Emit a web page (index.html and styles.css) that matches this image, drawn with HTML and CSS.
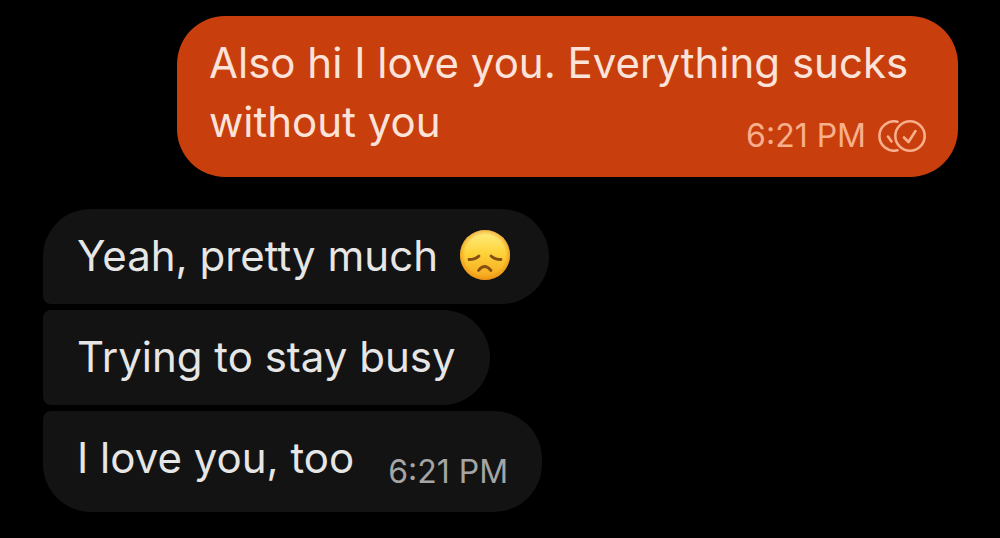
FILE: index.html
```
<!DOCTYPE html>
<html lang="en">
<head>
  <meta charset="UTF-8">
  <meta name="viewport" content="width=device-width, initial-scale=1.0">
  <title>Chat</title>
  <link rel="stylesheet" href="styles.css">
</head>
<body>
  <main class="chat">
    <!-- Sent -->
    <div class="bubble sent">
      Also hi I love you. Everything sucks<br>
      without you
      <span class="meta">
        <time>6:21 PM</time>
        <svg class="read-icon" viewBox="0 0 48 32" role="img" aria-label="Read">
          <path d="M19.500 1.700A14.700 14.700 0 1 0 19.500 30.300M10 16.500l3.500 5"/>
          <circle cx="32" cy="16" r="14.700"/>
          <path d="M26 17.500l4.500 4.500L37.500 11"/>
        </svg>
      </span>
    </div>

    <!-- Received -->
    <div class="group">
      <div class="bubble received">Yeah, pretty much <svg class="emoji" viewBox="0 0 50 50" role="img" aria-label="Disappointed face">
          <defs>
            <linearGradient id="face" x1="0" y1="0" x2="0" y2="1">
              <stop offset="0" stop-color="#ffee85"/>
              <stop offset="0.45" stop-color="#fed43c"/>
              <stop offset="1" stop-color="#f5a41c"/>
            </linearGradient>
            <radialGradient id="edge">
              <stop offset="0.8" stop-color="#e98a10" stop-opacity="0"/>
              <stop offset="1" stop-color="#e98a10" stop-opacity="0.6"/>
            </radialGradient>
          </defs>
          <circle cx="25" cy="25" r="25" fill="url(#face)"/>
          <circle cx="25" cy="25" r="25" fill="url(#edge)"/>
          <g fill="none" stroke="#85500f" stroke-linecap="round" stroke-width="2.800">
            <path d="M9 29.500q6.500 0 10-3.500M31 26q3.500 3.500 10 3.500"/>
            <path d="M18.500 40.500q6-8 12.500 0"/>
          </g>
        </svg></div>
      <div class="bubble received">Trying to stay busy</div>
      <div class="bubble received">
        I love you, too
        <span class="meta"><time>6:21 PM</time></span>
      </div>
    </div>
  </main>
</body>
</html>
```
FILE: styles.css
```
* {
  margin: 0;
  padding: 0;
  box-sizing: border-box;
}

body {
  font-family: Inter, 'Liberation Sans', sans-serif;
  background-color: #000;
  color: #e6e6e6;
}

.chat {
  display: flex;
  flex-direction: column;
  gap: 32px;
  padding: 16px 42px 24px 43px;
}

.group {
  display: flex;
  flex-direction: column;
  align-items: flex-start;
  gap: 6px;
}

.bubble {
  display: flow-root;
  padding: 17px 34px 19px;
  font-size: 42px;
  line-height: 59px;
  border-radius: 48px;
}

.sent {
  align-self: flex-end;
  width: 100%;
  max-width: 781px;
  padding: 17px 32px 25px;
  background-color: #c83f0d;
  color: #fbe3da;
}

.received {
  background-color: #131313;
  border-radius: 8px 48px 48px 8px;
}

.received:first-child {
  border-top-left-radius: 48px;
}

.received:last-child {
  padding-bottom: 24px;
  border-bottom-left-radius: 48px;
}

/* time and read mark, sits at the end of the last line */
.meta {
  float: right;
  display: flex;
  align-items: center;
  gap: 12px;
  margin-top: 28px;
  margin-left: 34px;
  font-size: 32px;
  line-height: 32px;
  color: #a5a5a5;
}

.sent .meta {
  color: #f9ae8c;
}

.read-icon {
  width: 48px;
  height: 32px;
  fill: none;
  stroke: currentColor;
  stroke-width: 2.6;
  stroke-linecap: round;
  stroke-linejoin: round;
}

.emoji {
  width: 50px;
  height: 50px;
  margin: 0 5px 0 10px;
  vertical-align: -9px;
}
```
